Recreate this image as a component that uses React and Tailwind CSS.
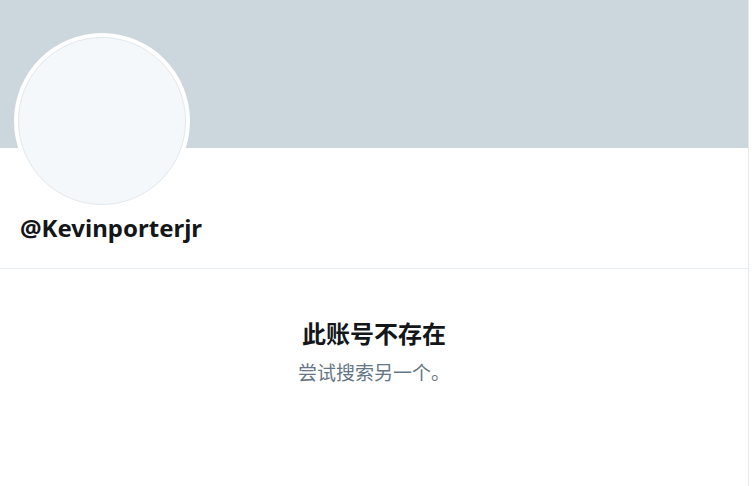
import React from 'react';

function App() {
    return (
        <div className="min-h-screen bg-white" style={{ fontFamily: '"Noto Sans", "Noto Sans CJK SC", sans-serif' }}>
            <div className="w-[749px] min-h-[486px] border-r border-[#e6ecf0]">
                <div className="h-[148px] bg-[#ccd6dd]"></div>
                <div className="px-[14px] -mt-[115px]">
                    <div className="w-[176px] h-[176px] rounded-full bg-white p-[4px]">
                        <div className="w-full h-full rounded-full bg-[#f5f8fa] border border-[#e1e8ed]"></div>
                    </div>
                </div>
                <div className="px-[20px] pt-0 pb-[21px]">
                    <h1 className="text-[24px] leading-[38px] font-bold text-[#14171a]">@Kevinporterjr</h1>
                </div>
                <div className="border-t border-[#e6ecf0]"></div>
                <div className="flex flex-col items-center pt-[49px]">
                    <h2 className="text-[24px] leading-[32px] font-bold text-[#14171a]">此账号不存在</h2>
                    <p className="mt-[11px] text-[19px] leading-[24px] text-[#657786]">尝试搜索另一个。</p>
                </div>
            </div>
        </div>
    );
}

export default App;
